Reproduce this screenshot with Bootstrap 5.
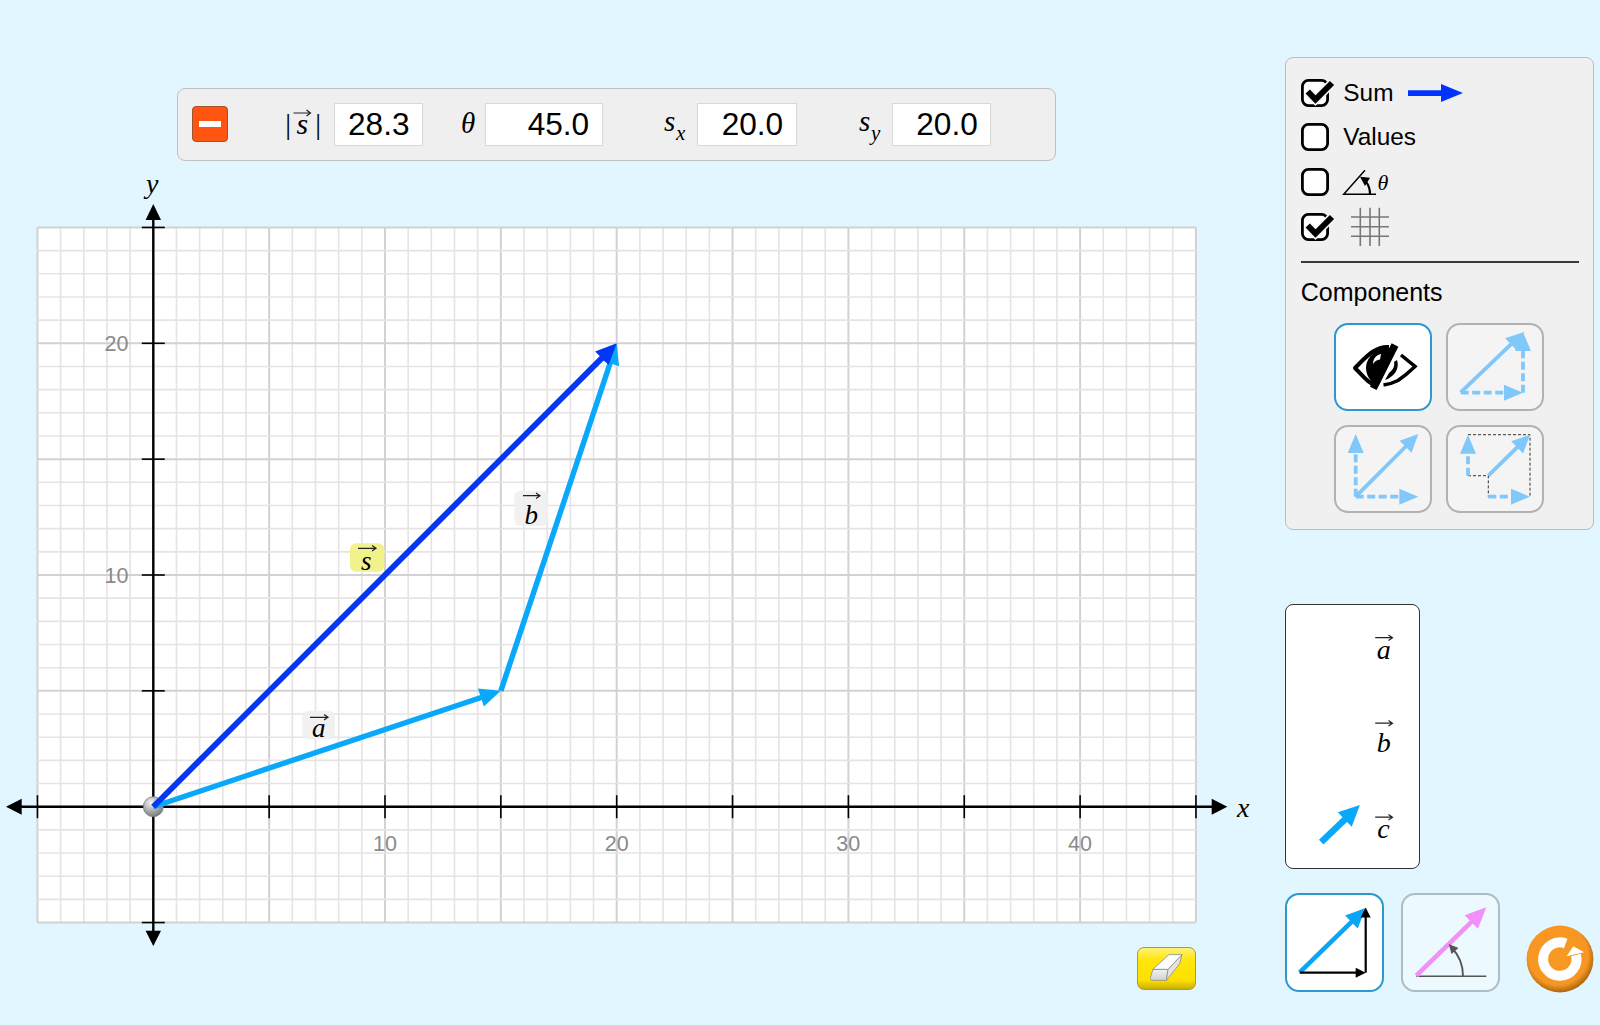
<!DOCTYPE html>
<html lang="en">
<head>
  <meta charset="UTF-8" />
  <title>Vector Addition</title>
  <link href="https://cdn.jsdelivr.net/npm/bootstrap@5.3.0/dist/css/bootstrap.min.css" rel="stylesheet" />
  <style>
    body { background: #e1f6ff; font-family: "Liberation Sans", Arial, sans-serif; color: #000; overflow: hidden; }
    svg { display: block; overflow: visible; }
    svg text { font-family: "Liberation Serif", "Times New Roman", serif; font-style: italic; fill: #000; }
    svg text.tick-num { font-family: "Liberation Sans", Arial, sans-serif; font-style: normal; font-size: 21.5px; fill: #8a8a8a; }
    .sim-page { width: 1600px; height: 1025px; }
    .sim-left { flex: 0 0 1285.3px; padding-top: 87.5px; }
    .sim-right { flex: 0 0 307.4px; padding-top: 57.3px; }

    .value-bar { margin-left: 177.3px; width: 878.7px; height: 73px; padding-left: 14px; display: grid; align-items: center; grid-template-columns: 36px 105.6px 89px 62.4px 117.3px 94.7px 99.3px 95.3px 99.3px; background: #efefef; border: 1.5px solid #c0c0c0; border-radius: 8px; }
    .minus-btn { width: 36px; height: 36px; padding: 0; background: #ff5511; border: 1px solid #a5532f; border-radius: 4px; }
    .minus-btn span { display: block; width: 22px; height: 6px; margin: 0 auto; background: #fff; }
    .value-label { justify-self: end; margin-right: 3px; }
    .value-box { height: 43px; padding-right: 12.4px; font-size: 31.6px; line-height: 41px; text-align: right; background: #fff; border: 1.5px solid #d8d8d8; }

    .graph-svg { margin-top: 4.5px; }
    .eraser-row { padding-right: 89.6px; }
    .eraser-btn { width: 58.6px; height: 43px; padding: 0; border: 1px solid #a99a3a; border-radius: 7px; background: linear-gradient(#fff27a 0, #ffe60f 28%, #ffe000 78%, #c9b000 100%); }

    .side-panel { height: 473px; padding: 20.5px 14px 0 14.5px; background: #f0f0f0; border: 1.5px solid #bcbcbc; border-radius: 8px; }
    .check-list { gap: 16.6px; }
    .check-row { height: 28px; gap: 14.5px; font-size: 24.4px; line-height: 28px; }
    .panel-rule { margin-top: 20.5px; border-top: 2px solid #3a3a3a; }
    .panel-title { margin-top: 14px; font-size: 25px; line-height: 30px; }
    .component-grid { margin-top: 15.5px; margin-left: 33.5px; display: grid; grid-template-columns: 98px 98px; gap: 13.6px 14px; }

    .tool-btn { width: 98px; height: 88.4px; padding: 0; background: #f4f4f4; border: 2px solid #b2b2b2; border-radius: 14px; }
    .tool-btn.is-on { background: #fff; border-color: #2e97cc; }
    .legend-panel { width: 135px; margin-top: 74px; height: 265px; background: #fff; border: 1.5px solid #333; border-radius: 8px; }
    .bottom-row { margin-top: 24px; }
    .view-btn { width: 99px; height: 99px; margin-right: 17px; background: #ecf9ff; border-color: #aebcc4; }
    .view-btn.is-on { background: #fff; }
    .reset-btn { margin: 32px 0 0 8.4px; }
  </style>
</head>
<body class="m-0">
  <div class="sim-page d-flex">

    <!-- Left side: value bar and graph -->
    <div class="sim-left">
      <div class="value-bar">
        <button class="btn minus-btn" type="button"><span></span></button>
        <svg class="value-label" width="50" height="42" viewBox="281.5 103 50 42">
          <text x="284" y="134" font-size="30">|</text>
          <text x="297" y="134" font-size="30">s</text>
          <path d="M294 113H311M307 110L311 113L307 116" fill="none" stroke="#222" stroke-width="1.2" />
          <text x="314" y="134" font-size="30">|</text>
        </svg>
        <div class="value-box">28.3</div>
        <svg class="value-label" width="24" height="42" viewBox="456 103 24 42">
          <text x="459" y="133" font-size="29">θ</text>
        </svg>
        <div class="value-box">45.0</div>
        <svg class="value-label" width="34" height="42" viewBox="660 103 34 42">
          <text x="664" y="131" font-size="29">s</text>
          <text x="676" y="140" font-size="21">x</text>
        </svg>
        <div class="value-box">20.0</div>
        <svg class="value-label" width="34" height="42" viewBox="854 103 34 42">
          <text x="858" y="131" font-size="29">s</text>
          <text x="870" y="140" font-size="21">y</text>
        </svg>
        <div class="value-box">20.0</div>
      </div>

      <svg class="graph-svg" width="1285" height="782" viewBox="0 165 1285 782">
        <defs>
          <radialGradient id="ballFill" cx="0.38" cy="0.3" r="0.8">
            <stop offset="0" stop-color="#f4f4f4" />
            <stop offset="0.55" stop-color="#a8a8a8" />
            <stop offset="1" stop-color="#6f6f6f" />
          </radialGradient>
        </defs>
        <g id="gridLines"></g>
        <g id="axes"></g>
        <text class="tick-num" x="128.5" y="351" text-anchor="end">20</text>
        <text class="tick-num" x="128.5" y="583" text-anchor="end">10</text>
        <text class="tick-num" x="385" y="851" text-anchor="middle">10</text>
        <text class="tick-num" x="616.7" y="851" text-anchor="middle">20</text>
        <text class="tick-num" x="848.3" y="851" text-anchor="middle">30</text>
        <text class="tick-num" x="1080" y="851" text-anchor="middle">40</text>
        <text x="146" y="193" font-size="28">y</text>
        <text x="1237" y="817" font-size="28">x</text>

        <rect x="350" y="543.3" width="34.3" height="28.4" rx="6" fill="#f2f28c" />
        <rect x="514.3" y="490.7" width="34" height="35.3" rx="6" fill="#f0f0f0" fill-opacity="0.9" />
        <rect x="302.3" y="710.7" width="32.7" height="28.6" rx="6" fill="#f0f0f0" fill-opacity="0.9" />
        <text x="361" y="570" font-size="27">s</text>
        <path d="M358 548.3H376M372 545.5L376 548.3L372 551" fill="none" stroke="#222" stroke-width="1.2" />
        <text x="524.5" y="524" font-size="27">b</text>
        <path d="M523 495.7H540M536 493L540 495.7L536 498.4" fill="none" stroke="#222" stroke-width="1.2" />
        <text x="312" y="736.7" font-size="27">a</text>
        <path d="M310 717.3H328M324 714.5L328 717.3L324 720" fill="none" stroke="#222" stroke-width="1.2" />

        <circle cx="153.3" cy="806.7" r="10" fill="url(#ballFill)" stroke="#777" stroke-width="0.8" />
        <g id="vectors"></g>
      </svg>

      <div class="eraser-row d-flex justify-content-end">
        <button class="btn eraser-btn" type="button">
          <svg width="56.6" height="41" viewBox="1 1 56.6 41">
            <defs>
              <linearGradient id="eraserFront" x1="0" y1="0" x2="0" y2="1">
                <stop offset="0" stop-color="#f2f2f2" />
                <stop offset="1" stop-color="#d2d2d2" />
              </linearGradient>
            </defs>
            <path d="M16 22.3L31 22.3L29.4 33.3H15.5C13.5 33.3 13 32 13.4 30.5Z" fill="url(#eraserFront)" stroke="#8c8c8c" stroke-width="0.8" stroke-linejoin="round" />
            <path d="M31 22.3L45 7.6L42.7 16.6L29.4 33.3Z" fill="#e4e4e4" stroke="#8c8c8c" stroke-width="0.8" stroke-linejoin="round" />
            <path d="M16 22.3L32 7.6H45L31 22.3Z" fill="#fff" stroke="#8c8c8c" stroke-width="0.8" stroke-linejoin="round" />
          </svg>
        </button>
      </div>
    </div>

    <!-- Right side: options, legend, view buttons -->
    <div class="sim-right">
      <div class="side-panel">
        <div class="check-list d-flex flex-column">
          <div class="check-row d-flex">
            <svg width="28" height="28" viewBox="0 0 28 28"><rect x="1.4" y="1.4" width="25.2" height="25.2" rx="6" fill="#fff" stroke="#000" stroke-width="2.8" /><path d="M6.7 12.5L14.5 20.5L31 4" fill="none" stroke="#f6f6f6" stroke-width="9" /><path d="M6.7 12.5L14.5 20.5L31 4" fill="none" stroke="#000" stroke-width="6" /></svg>
            <span>Sum</span>
            <svg width="55" height="28" viewBox="1407 78 55 28"><path d="M1407 89.3H1440V83L1462 92L1440 101V95H1407Z" fill="#0033ff" /></svg>
          </div>
          <div class="check-row d-flex">
            <svg width="28" height="28" viewBox="0 0 28 28"><rect x="1.4" y="1.4" width="25.2" height="25.2" rx="6" fill="#fff" stroke="#000" stroke-width="2.8" /></svg>
            <span>Values</span>
          </div>
          <div class="check-row d-flex">
            <svg width="28" height="28" viewBox="0 0 28 28"><rect x="1.4" y="1.4" width="25.2" height="25.2" rx="6" fill="#fff" stroke="#000" stroke-width="2.8" /></svg>
            <svg width="50" height="28" viewBox="1342 167 50 28">
              <path d="M1375 193.3H1342.7L1364 169.3" fill="none" stroke="#000" stroke-width="1.5" />
              <path d="M1369 193.3C1369 188 1367.5 184 1365 180.7" fill="none" stroke="#000" stroke-width="2.2" />
              <path d="M1359 175.7L1369 176.7L1364 185Z" fill="#000" />
              <text x="1376.5" y="189" font-size="22">θ</text>
            </svg>
          </div>
          <div class="check-row d-flex">
            <svg width="28" height="28" viewBox="0 0 28 28"><rect x="1.4" y="1.4" width="25.2" height="25.2" rx="6" fill="#fff" stroke="#000" stroke-width="2.8" /><path d="M6.7 12.5L14.5 20.5L31 4" fill="none" stroke="#f6f6f6" stroke-width="9" /><path d="M6.7 12.5L14.5 20.5L31 4" fill="none" stroke="#000" stroke-width="6" /></svg>
            <svg width="50" height="28" viewBox="1342 212 50 28">
              <path d="M1359.3 206.7V245M1369 206.7V245M1378.3 206.7V245M1350 216H1388M1350 225.7H1388M1350 235.3H1388" fill="none" stroke="#777" stroke-width="1.6" />
            </svg>
          </div>
        </div>
        <div class="panel-rule"></div>
        <div class="panel-title">Components</div>
        <div class="component-grid">
          <button class="btn tool-btn is-on" type="button">
            <svg width="94" height="84.4" viewBox="2 2 94 84.4">
              <path d="M55 24C41 23 32 34 21 45C30 54 34 60 43 63" fill="none" stroke="#000" stroke-width="4" stroke-linejoin="round" />
              <path d="M58 26C42 23 32 35 32 45C32 52 36 58 42 62Z" fill="#000" />
              <path d="M47 31C42 32 39 36 39 41C41 38 43 37 46 36.5Z" fill="#fff" />
              <path d="M61 22L39.3 65.4" stroke="#000" stroke-width="7.5" />
              <path d="M67 32L81 43.4Q72 52 64 57.5Q57 61 49.5 62" fill="none" stroke="#000" stroke-width="3.5" />
              <path d="M63 37C66 46 60 54 51 57L55 50C59 47 61 43 60 39Z" fill="#000" />
            </svg>
          </button>
          <button class="btn tool-btn" type="button"><svg id="iconTip" width="94" height="84.4" viewBox="2 2 94 84.4"></svg></button>
          <button class="btn tool-btn" type="button"><svg id="iconOrigin" width="94" height="84.4" viewBox="2 2 94 84.4"></svg></button>
          <button class="btn tool-btn" type="button">
            <svg id="iconBox" width="94" height="84.4" viewBox="2 2 94 84.4"></svg>
          </button>
        </div>
      </div>

      <div class="legend-panel d-flex flex-column">
        <svg width="132" height="88" viewBox="1286.8 605.8 132 88">
          <text x="1377.5" y="659.5" font-size="28">a</text>
          <path d="M1376 638.5H1393.3M1389.3 635.8L1393.3 638.5L1389.3 641.2" fill="none" stroke="#222" stroke-width="1.2" />
        </svg>
        <svg width="132" height="88" viewBox="1286.8 693.8 132 88">
          <text x="1377.5" y="753" font-size="28">b</text>
          <path d="M1376 724H1393.3M1389.3 721.3L1393.3 724L1389.3 726.7" fill="none" stroke="#222" stroke-width="1.2" />
        </svg>
        <svg width="132" height="88" viewBox="1286.8 781.8 132 88">
          <text x="1378" y="839" font-size="28">c</text>
          <path d="M1376 818H1393.3M1389.3 815.3L1393.3 818L1389.3 820.7" fill="none" stroke="#222" stroke-width="1.2" />
          <g id="legendArrow"></g>
        </svg>
      </div>

      <div class="bottom-row d-flex align-items-start">
        <button class="btn tool-btn view-btn is-on" type="button"><svg id="iconCartesian" width="95" height="95" viewBox="2 2 95 95"></svg></button>
        <button class="btn tool-btn view-btn" type="button"><svg id="iconPolar" width="95" height="95" viewBox="2 2 95 95"></svg></button>
        <button class="btn p-0 border-0 reset-btn" type="button">
          <svg width="68" height="68" viewBox="0 0 68 68">
            <defs>
              <radialGradient id="resetFill" cx="0.47" cy="0.44" r="0.56">
                <stop offset="0" stop-color="#f89a24" />
                <stop offset="0.8" stop-color="#f79622" />
                <stop offset="1" stop-color="#a9660f" />
              </radialGradient>
            </defs>
            <circle cx="34" cy="34" r="33.4" fill="url(#resetFill)" />
            <path d="M39.7 18.5A16.7 16.7 0 1 0 50 30" fill="none" stroke="#fff" stroke-width="10" />
            <path d="M47.3 21.3L58 27.3L40.7 31.3Z" fill="#fff" />
          </svg>
        </button>
      </div>
    </div>
  </div>

  <script src="https://cdn.jsdelivr.net/npm/bootstrap@5.3.0/dist/js/bootstrap.bundle.min.js"></script>
  <script>
    const originX = 153.3, originY = 806.7, unit = 23.17;
    const gx = v => originX + v * unit;
    const gy = v => originY - v * unit;

    // shaft plus filled head, same for graph vectors and button icons
    function arrow(x0, y0, x1, y1, o) {
      const len = Math.hypot(x1 - x0, y1 - y0);
      const ux = (x1 - x0) / len, uy = (y1 - y0) / len;
      const bx = x1 - ux * o.hl, by = y1 - uy * o.hl;
      const dash = o.dash ? ` stroke-dasharray="${o.dash}"` : '';
      const a = `${(bx - uy * o.hw).toFixed(1)},${(by + ux * o.hw).toFixed(1)}`;
      const b = `${(bx + uy * o.hw).toFixed(1)},${(by - ux * o.hw).toFixed(1)}`;
      return `<line x1="${x0}" y1="${y0}" x2="${(bx + ux).toFixed(1)}" y2="${(by + uy).toFixed(1)}" stroke="${o.color}" stroke-width="${o.w}"${dash}/>` +
        `<polygon points="${x1},${y1} ${a} ${b}" fill="${o.color}"/>`;
    }

    function line(x0, y0, x1, y1, color, w) {
      return `<line x1="${x0}" y1="${y0}" x2="${x1}" y2="${y1}" stroke="${color}" stroke-width="${w}"/>`;
    }

    // graph grid
    let grid = `<rect x="${gx(-5)}" y="${gy(25)}" width="${50 * unit}" height="${30 * unit}" fill="#fff"/>`;
    for (let i = -5; i <= 45; i++) {
      const major = i % 5 === 0;
      grid += line(gx(i), gy(25), gx(i), gy(-5), major ? '#d2d2d2' : '#e4e4e4', major ? 2 : 1.6);
    }
    for (let j = -5; j <= 25; j++) {
      const major = j % 5 === 0;
      grid += line(gx(-5), gy(j), gx(45), gy(j), major ? '#d2d2d2' : '#e4e4e4', major ? 2 : 1.6);
    }
    document.getElementById('gridLines').innerHTML = grid;

    // axes and ticks
    let axes = '';
    axes += line(21, originY, 1212, originY, '#000', 2.4);
    axes += line(originX, 219, originX, 931, '#000', 2.4);
    axes += `<polygon points="6,${originY} 21.7,${originY - 8} 21.7,${originY + 8}" fill="#000"/>`;
    axes += `<polygon points="1227.3,${originY} 1211.7,${originY - 8} 1211.7,${originY + 8}" fill="#000"/>`;
    axes += `<polygon points="${originX},204 ${originX - 7.7},220 ${originX + 7.7},220" fill="#000"/>`;
    axes += `<polygon points="${originX},946 ${originX - 7.7},930.7 ${originX + 7.7},930.7" fill="#000"/>`;
    for (let i = -5; i <= 45; i += 5) {
      if (i !== 0) axes += line(gx(i), originY - 11.5, gx(i), originY + 11.5, '#000', 1.6);
    }
    for (let j = -5; j <= 25; j += 5) {
      if (j !== 0) axes += line(originX - 11.5, gy(j), originX + 11.5, gy(j), '#000', 1.6);
    }
    document.getElementById('axes').innerHTML = axes;

    // vectors
    const vecBlue = { color: '#0aa8fb', w: 5.4, hl: 21, hw: 9.5 };
    const sumBlue = { color: '#0336f5', w: 5.8, hl: 21, hw: 9.5 };
    document.getElementById('vectors').innerHTML =
      arrow(originX, originY, gx(15), gy(5), vecBlue) +
      arrow(gx(15), gy(5), gx(20), gy(20), vecBlue) +
      arrow(originX, originY, gx(20), gy(20), sumBlue);

    document.getElementById('legendArrow').innerHTML =
      arrow(1322, 843, 1360.7, 805.7, { color: '#0aa8fb', w: 6.5, hl: 21, hw: 10 });

    // component buttons
    const soft = { color: '#80c8fa', w: 3.8, hl: 19, hw: 8, dash: '8 3.5' };
    const softMain = { color: '#80c8fa', w: 3.8, hl: 18, hw: 8.5 };
    document.getElementById('iconTip').innerHTML =
      arrow(14.7, 69.3, 78, 9, softMain) +
      arrow(14.7, 69.7, 77, 69.7, soft) +
      arrow(77, 69.7, 77, 9, soft);
    document.getElementById('iconOrigin').innerHTML =
      arrow(21.7, 71.7, 84.3, 9, softMain) +
      arrow(21.7, 71.7, 21.7, 9, soft) +
      arrow(21.7, 71.7, 84.3, 71.7, soft);
    document.getElementById('iconBox').innerHTML =
      '<path d="M22 50.7H42.3V71.7M22 9.7H84V71.7" fill="none" stroke="#333" stroke-width="1" stroke-dasharray="3 2"/>' +
      arrow(42.3, 50.7, 84, 9.7, softMain) +
      arrow(22, 50.7, 22, 9.7, soft) +
      arrow(42.3, 71.7, 84, 71.7, soft);

    // bottom view buttons
    const black = { color: '#000', w: 2.2, hl: 10, hw: 5 };
    document.getElementById('iconCartesian').innerHTML =
      arrow(14.7, 79.3, 80.7, 15, { color: '#0aa5f5', w: 4.6, hl: 20, hw: 9 }) +
      arrow(14.7, 79.7, 80.7, 79.7, black) +
      arrow(80.7, 79.7, 80.7, 14.4, black);
    document.getElementById('iconPolar').innerHTML =
      line(15.3, 83.3, 85.3, 83.3, '#555', 1.6) +
      arrow(15.3, 82.7, 85.3, 14.3, { color: '#f090f8', w: 4.6, hl: 21, hw: 9.5 }) +
      '<path d="M62 83C62 70 57 61 50 54" fill="none" stroke="#555" stroke-width="1.8"/>' +
      '<polygon points="47.7,51 57.5,55 50.5,61" fill="#555"/>';
  </script>
</body>
</html>
